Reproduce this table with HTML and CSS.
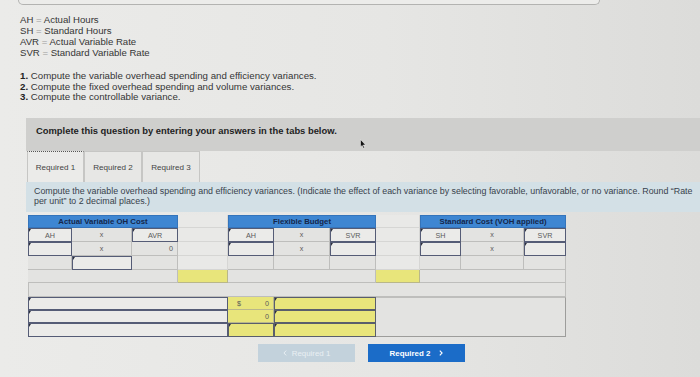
FILE: index.html
```html
<!DOCTYPE html>
<html lang="en">
<head>
<meta charset="utf-8">
<title>Variable overhead variances</title>
<link rel="stylesheet" href="styles.css">
</head>
<body>
<div class="page">
  <div class="topbox"></div>
  <div class="defs">
    <div>AH <span class="eq">=</span> Actual Hours</div>
    <div>SH <span class="eq">=</span> Standard Hours</div>
    <div>AVR <span class="eq">=</span> Actual Variable Rate</div>
    <div>SVR <span class="eq">=</span> Standard Variable Rate</div>
  </div>
  <ol class="tasks">
    <li><b>1.</b> Compute the variable overhead spending and efficiency variances.</li>
    <li><b>2.</b> Compute the fixed overhead spending and volume variances.</li>
    <li><b>3.</b> Compute the controllable variance.</li>
  </ol>
  <div class="main">
    <div class="banner">Complete this question by entering your answers in the tabs below.
      <svg class="cursor" viewBox="0 0 6 10" aria-hidden="true"><path d="M0.5 0.5 L0.5 8 L2.2 6.4 L3.4 9.3 L4.5 8.8 L3.3 6 L5.6 6 Z" fill="#111" stroke="#fff" stroke-width="0.5"/></svg>
    </div>
    <div class="tabs">
      <div class="tab active">Required 1</div>
      <div class="tab">Required 2</div>
      <div class="tab">Required 3</div>
    </div>
    <div class="info">Compute the variable overhead spending and efficiency variances. (Indicate the effect of each variance by selecting favorable, unfavorable, or no variance. Round “Rate<br>per unit” to 2 decimal places.)</div>

    <div class="vgrid">
      <!-- header -->
      <div class="c hd span3">Actual Variable OH Cost</div>
      <div class="c gap"></div>
      <div class="c hd span3">Flexible Budget</div>
      <div class="c gap"></div>
      <div class="c hd span3">Standard Cost (VOH applied)</div>
      <!-- row 1 -->
      <div class="c in">AH</div>
      <div class="c">x</div>
      <div class="c in">AVR</div>
      <div class="c gap"></div>
      <div class="c in">AH</div>
      <div class="c">x</div>
      <div class="c in">SVR</div>
      <div class="c gap"></div>
      <div class="c in">SH</div>
      <div class="c">x</div>
      <div class="c in">SVR</div>
      <!-- row 2 -->
      <div class="c in"></div>
      <div class="c">x</div>
      <div class="c r">0</div>
      <div class="c gap"></div>
      <div class="c in"></div>
      <div class="c">x</div>
      <div class="c in"></div>
      <div class="c gap"></div>
      <div class="c in"></div>
      <div class="c">x</div>
      <div class="c in"></div>
      <!-- row 3 -->
      <div class="c"></div>
      <div class="c in"></div>
      <div class="c"></div>
      <div class="c gap"></div>
      <div class="c"></div>
      <div class="c"></div>
      <div class="c"></div>
      <div class="c gap"></div>
      <div class="c"></div>
      <div class="c"></div>
      <div class="c"></div>
      <!-- row 4 -->
      <div class="c span3"></div>
      <div class="c y"></div>
      <div class="c span3"></div>
      <div class="c y"></div>
      <div class="c span3"></div>
      <!-- row 5 -->
      <div class="c span11"></div>
      <!-- variance rows -->
      <div class="c in span4"></div>
      <div class="c y dollar"><span>$</span><span>0</span></div>
      <div class="c yin span2"></div>
      <div class="c blank"></div>
      <div class="c in span4"></div>
      <div class="c y r">0</div>
      <div class="c yin span2"></div>
      <div class="c in span4"></div>
      <div class="c yin"></div>
      <div class="c yin span2"></div>
    </div>

    <div class="nav">
      <button class="btn prev" type="button" disabled><svg class="chev" viewBox="0 0 4 6" aria-hidden="true"><path d="M3.2 0.6 L0.9 3 L3.2 5.4" fill="none" stroke="currentColor" stroke-width="1"/></svg>Required 1</button>
      <button class="btn next" type="button">Required 2<svg class="chev after" viewBox="0 0 4 6" aria-hidden="true"><path d="M0.8 0.6 L3.1 3 L0.8 5.4" fill="none" stroke="currentColor" stroke-width="1.1"/></svg></button>
    </div>
  </div>
</div>
</body>
</html>
```

FILE: styles.css
```css
html, body {
  margin: 0;
  padding: 0;
}

body {
  background: #e6e6e4;
  overflow: hidden;
  font-family: "Liberation Sans", Arial, sans-serif;
  color: #353535;
}

.page {
  width: 700px;
  height: 377px;
  overflow: hidden;
  background: linear-gradient(90deg, #ebebe9 0%, #e6e6e4 55%, #dcdcda 100%);
}

.topbox {
  margin-left: 18px;
  width: 580px;
  height: 4px;
  border: 1px solid #b3b3b1;
  border-top: 0;
  border-radius: 0 0 5px 5px;
  background: #ececea;
}

.defs {
  margin: 9px 0 0 20px;
  font-size: 9.6px;
  line-height: 11px;
}

.eq {
  color: #9a9a9a;
}

.tasks {
  margin: 13px 0 0 20px;
  padding: 0;
  list-style: none;
  font-size: 9.7px;
  line-height: 10.5px;
}

.tasks b {
  font-weight: 700;
  color: #222;
}

.main {
  margin: 15.5px 0 0 26px;
  width: 674px;
}

.banner {
  position: relative;
  height: 33px;
  box-sizing: border-box;
  padding: 7px 10px;
  background: #cfcfcd;
  font-weight: 700;
  font-size: 9.4px;
  line-height: 11px;
  color: #222;
}

.cursor {
  position: absolute;
  left: 334px;
  top: 21px;
  width: 6px;
  height: 10px;
}

.tabs {
  display: flex;
  height: 31px;
  padding-left: 1px;
}

.tab {
  width: 58px;
  box-sizing: border-box;
  border: 1px solid #c6c6c4;
  border-bottom: 0;
  display: flex;
  align-items: center;
  justify-content: center;
  font-size: 8.1px;
  color: #444;
  background: #e7e7e5;
}

.tab.active {
  width: 57px;
  border-top: 1px dotted #555;
  background: #ebebe9;
}

.info {
  height: 30px;
  box-sizing: border-box;
  padding: 4px 0 4px 8px;
  background: #d3e0e6;
  font-size: 8.85px;
  line-height: 10px;
  color: #38424c;
  white-space: nowrap;
}

.vgrid {
  margin: 3px 0 0 2px;
  display: grid;
  grid-template-columns: 44px 60px 46px 50px 46px 56px 46px 44px 41px 63px 42px;
  grid-template-rows: 13px 14px 14px 14px 13px 14px 13px 13px 14px;
  width: 538px;
  font-size: 7.2px;
  color: #5a5a5a;
}

.c {
  position: relative;
  box-sizing: border-box;
  border-right: 1px solid #bebebc;
  border-bottom: 1px solid #bebebc;
  background: #e3e3e1;
  display: flex;
  align-items: center;
  justify-content: center;
}

.gap {
  background: #e9e9e7;
  border-color: #d6d6d4;
}

.hd {
  background: #3e86d2;
  border: 1px solid #3474bb;
  color: #15264a;
  font-weight: 700;
  font-size: 7.8px;
}

.in {
  background: #ebebe9;
  border: 1px solid #555c76;
}

.in::before,
.yin::before {
  content: "";
  position: absolute;
  left: 0;
  top: 0;
  border-left: 2px solid #2b2f3c;
  border-bottom: 3px solid transparent;
}

.y {
  background: #e8e57b;
  border-color: #b9b78a;
}

.yin {
  background: #e8e57b;
  border: 1px solid #595e6c;
}

.r {
  justify-content: flex-end;
  padding-right: 4px;
}

.dollar {
  justify-content: space-between;
  padding: 0 4px 0 9px;
}

.span2 { grid-column: span 2; }
.span3 { grid-column: span 3; }
.span4 { grid-column: span 4; }
.span11 { grid-column: span 11; border-left: 1px solid #bebebc; }

.blank {
  grid-column: span 4;
  grid-row: span 3;
  border-color: #9d9d9b;
  border-top: 1px solid #bebebc;
}

.nav {
  display: flex;
  gap: 13px;
  margin: 7px 0 0 232px;
}

.btn {
  width: 97px;
  height: 18px;
  border: 0;
  padding: 0;
  display: flex;
  align-items: center;
  justify-content: center;
  gap: 5px;
  font-family: "Liberation Sans", Arial, sans-serif;
  font-size: 7.9px;
}

.prev {
  background: #c3d2dc;
  color: #e9eff3;
}

.next {
  background: #1b6cc8;
  color: #fff;
  font-weight: 700;
  gap: 9px;
}

.chev {
  width: 4px;
  height: 6px;
}
```
